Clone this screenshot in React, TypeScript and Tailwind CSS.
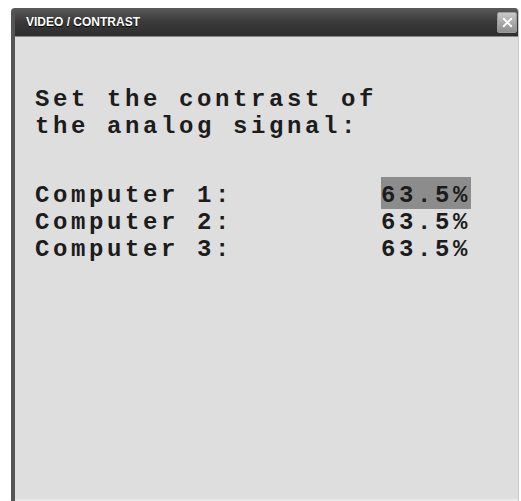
import { X } from 'lucide-react';

const rows = [
  { label: 'Computer 1:', value: '63.5%', active: true },
  { label: 'Computer 2:', value: '63.5%', active: false },
  { label: 'Computer 3:', value: '63.5%', active: false },
];

export default function App() {
  return (
    <div className="w-[521px] h-[501px] bg-white pl-[11px] pt-[8px] pr-[2px] flex">
      <div className="flex-1 flex flex-col rounded-t-[4px] overflow-hidden border-l-[4px] border-l-[#555] border-r border-r-[#c8c8c8]">
        {/* title bar */}
        <div className="h-[29px] flex items-center justify-between bg-gradient-to-b from-[#5a5a5a] via-[#3a3a3a] to-[#2e2e2e] border-b border-[#8a8a8a] pl-[11px] pr-[1px]">
          <span className="text-white text-[12px] font-bold font-['Liberation_Sans',sans-serif] [text-shadow:0_1px_1px_#000]">
            VIDEO / CONTRAST
          </span>
          <div className="w-[20px] h-[21px] flex items-center justify-center rounded-[2px] border border-[#9a9a9a] bg-gradient-to-b from-[#c8c8c8] to-[#8e8e8e]">
            <X className="w-[15px] h-[15px] text-white" strokeWidth={3} />
          </div>
        </div>
        {/* body */}
        <div className="flex-1 bg-[#dedede] border-b-[2px] border-[#eaeaea] pl-[20px] pr-[47px] pt-[49px] text-[24px] leading-[27px] tracking-[3.6px] font-bold text-[#1c1c1c] font-['Liberation_Mono','Courier_New',monospace]">
          <div>Set the contrast of</div>
          <div>the analog signal:</div>
          <div className="mt-[42px]">
            {rows.map((r) => (
              <div key={r.label} className="flex justify-between">
                <span>{r.label}</span>
                <span className={r.active ? 'bg-[#8c8c8c] shadow-[0_-5px_0_#8c8c8c]' : ''}>{r.value}</span>
              </div>
            ))}
          </div>
        </div>
      </div>
    </div>
  );
}
